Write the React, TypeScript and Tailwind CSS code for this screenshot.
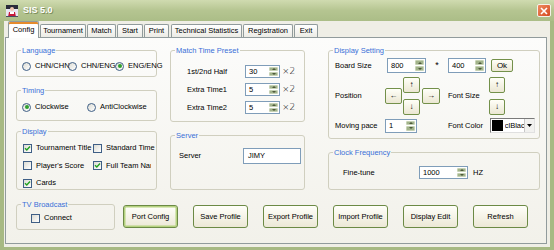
import React from "react"

const FONT = "font-['Liberation_Sans',Arial,sans-serif]"

function Radio({ on, label }: { on?: boolean; label: string }) {
  return (
    <span className="flex items-center gap-[4px] h-[10px] whitespace-nowrap">
      <span className="w-[9px] h-[9px] shrink-0 rounded-full border border-[#3f5f86] bg-gradient-to-br from-[#dcdcd4] to-white flex items-center justify-center">
        {on && <span className="w-[4px] h-[4px] rounded-full bg-[#2fa02f]" />}
      </span>
      <span>{label}</span>
    </span>
  )
}

function Check({ on, label, clip }: { on?: boolean; label: string; clip?: boolean }) {
  return (
    <span className="flex items-center gap-[4px] h-[10px] whitespace-nowrap">
      <span className="w-[9px] h-[9px] shrink-0 border border-[#3f5f86] bg-gradient-to-br from-[#dcdcd4] to-white flex items-center justify-center">
        {on && (
          <svg width="7" height="7" viewBox="0 0 7 7">
            <path d="M1 3.2 L2.8 5 L6 1.5" fill="none" stroke="#21a121" strokeWidth="1.4" />
          </svg>
        )}
      </span>
      <span className={clip ? "w-[45px] overflow-hidden" : ""}>{label}</span>
    </span>
  )
}

function SpinArrows() {
  return (
    <span className="flex flex-col w-[10px] gap-[1px] py-[1px] pr-[1px]">
      <span className="flex-1 rounded-[1px] bg-[#a2b38b] border border-[#c6d2b4] flex items-center justify-center">
        <svg width="4" height="2" viewBox="0 0 4 2"><path d="M0 2 L2 0 L4 2Z" fill="#4d5a3c" /></svg>
      </span>
      <span className="flex-1 rounded-[1px] bg-[#a2b38b] border border-[#c6d2b4] flex items-center justify-center">
        <svg width="4" height="2" viewBox="0 0 4 2"><path d="M0 0 L2 2 L4 0Z" fill="#4d5a3c" /></svg>
      </span>
    </span>
  )
}

function Spin({ value, className }: { value: string; className: string }) {
  return (
    <span className={`flex border border-[#7f9db9] bg-white ${className}`}>
      <span className="flex-1 flex items-center pl-[3px]">{value}</span>
      <SpinArrows />
    </span>
  )
}

function SmallBtn({ children, className }: { children: React.ReactNode; className: string }) {
  return (
    <span
      className={`flex items-center justify-center rounded-[2px] border border-[#73904a] bg-gradient-to-b from-[#fffff8] to-[#ebe7d3] text-[8px] leading-none ${className}`}
    >
      {children}
    </span>
  )
}

function Group({
  title,
  className,
  children,
}: {
  title: string
  className: string
  children: React.ReactNode
}) {
  return (
    <fieldset className={`border border-[#d0cfbf] rounded-[3px] min-w-0 ${className}`}>
      <legend className="ml-[4px] px-[1px] leading-[9px] text-[#3a70d8]">{title}</legend>
      {children}
    </fieldset>
  )
}

function Button({ label, primary }: { label: string; primary?: boolean }) {
  return (
    <span
      className={`w-[55px] h-[23px] flex items-center justify-center rounded-[3px] border border-[#6c8a45] bg-gradient-to-b from-[#fffffa] to-[#ece8d6] ${
        primary ? "shadow-[inset_0_0_0_1.5px_#b5d27f]" : ""
      }`}
    >
      {label}
    </span>
  )
}

const tabs = [
  { name: "Tournament", w: "w-[46px]", ml: "ml-[1px]" },
  { name: "Match", w: "w-[29px]", ml: "ml-[1px]" },
  { name: "Start", w: "w-[26px]", ml: "ml-[1px]" },
  { name: "Print", w: "w-[25px]", ml: "ml-[1px]" },
  { name: "Technical Statistics", w: "w-[71px]", ml: "ml-[2px]" },
  { name: "Registration", w: "w-[50px]", ml: "ml-[1px]" },
  { name: "Exit", w: "w-[24px]", ml: "ml-[1px]" },
]

export default function App() {
  return (
    <div className={`w-[554px] h-[250px] flex flex-col bg-[#a7b983] text-black text-[7.5px] ${FONT}`}>
      {/* title bar */}
      <div className="h-[21px] shrink-0 flex items-center bg-gradient-to-b from-[#d0dbb0] via-[#b5c591] to-[#abbd87] px-[5px]">
        <svg width="14" height="14" viewBox="0 0 14 14">
          <rect x="1" y="1" width="12" height="12" fill="#e9e6f2" />
          <rect x="1" y="1" width="12" height="4" fill="#2b2b3a" />
          <circle cx="7" cy="5" r="2" fill="#f2c7b0" />
          <path d="M3 13 L4 8 L10 8 L11 13Z" fill="#c8183a" />
          <rect x="5" y="8" width="4" height="2" fill="#fff" />
          <rect x="1" y="12" width="12" height="1" fill="#4b4b62" />
        </svg>
        <span className="ml-[4px] text-[9px] font-bold text-white [text-shadow:1px_1px_0_#7d8e5c]">SIS 5.0</span>
        <span className="ml-auto mr-[-2px] w-[14px] h-[13px] rounded-[2px] border border-[#f4f1e8] bg-gradient-to-br from-[#ef8a5e] to-[#d4481f] flex items-center justify-center">
          <svg width="8" height="8" viewBox="0 0 8 8">
            <path d="M1 1 L7 7 M7 1 L1 7" stroke="#fff" strokeWidth="1.6" />
          </svg>
        </span>
      </div>

      {/* client */}
      <div className="flex-1 mx-[4px] mb-[3px] bg-[#efeee6] flex flex-col">
        <div className="h-[16px] shrink-0 flex items-end pl-[4px]">
          <span className="relative z-10 -mb-[1px] w-[31px] h-[17px] flex items-center justify-center bg-white border border-b-0 border-[#919b9c] rounded-t-[2px] shadow-[inset_0_2px_0_#e68b2c]">
            Config
          </span>
          {tabs.map((t) => (
            <span
              key={t.name}
              className={`${t.w} ${t.ml} h-[13px] flex items-center justify-center whitespace-nowrap bg-gradient-to-b from-white to-[#ecebe5] border border-b-0 border-[#919b9c] rounded-t-[2px]`}
            >
              {t.name}
            </span>
          ))}
        </div>

        {/* tab page */}
        <div className="ml-[1px] w-[542px] h-[207px] border border-[#919b9c] bg-gradient-to-b from-[#fcfcfb] to-[#f2f1ea] pl-[10px] pt-[8px]">
          <div className="flex">
            {/* column 1 */}
            <div className="w-[141px] flex flex-col">
              <Group title="Language" className="h-[31px]">
                <div className="flex pt-[6px] pl-[5px]">
                  <span className="w-[46px]"><Radio label="CHN/CHN" /></span>
                  <span className="w-[47px]"><Radio label="CHN/ENG" /></span>
                  <Radio on label="ENG/ENG" />
                </div>
              </Group>
              <Group title="Timing" className="h-[35px] mt-[9px]">
                <div className="flex pt-[7px] pl-[5px]">
                  <span className="w-[65px]"><Radio on label="Clockwise" /></span>
                  <Radio label="AntiClockwise" />
                </div>
              </Group>
              <Group title="Display" className="h-[63.5px] mt-[5.5px]">
                <div className="flex flex-col gap-[7.5px] pt-[7.5px] pl-[6px]">
                  <div className="flex">
                    <span className="w-[70px]"><Check on label="Tournament Title" /></span>
                    <Check label="Standard Time" />
                  </div>
                  <div className="flex">
                    <span className="w-[70px]"><Check label="Player's Score" /></span>
                    <Check on clip label="Full Team Name" />
                  </div>
                  <Check on label="Cards" />
                </div>
              </Group>
            </div>

            {/* column 2 */}
            <div className="w-[135px] ml-[13px] flex flex-col">
              <Group title="Match Time Preset" className="h-[76px]">
                <div className="flex flex-col gap-[5px] pt-[10px] pl-[16px]">
                  {[
                    ["1st/2nd Half", "30"],
                    ["Extra Time1", "5"],
                    ["Extra Time2", "5"],
                  ].map(([l, v]) => (
                    <div key={l} className="flex items-center h-[13px]">
                      <span className="w-[58px]">{l}</span>
                      <Spin value={v} className="w-[35px] h-[13px]" />
                      <span className="ml-[2px] text-[9px] leading-none font-['DejaVu_Sans',sans-serif] font-light">×2</span>
                    </div>
                  ))}
                </div>
              </Group>
              <Group title="Server" className="h-[59.5px] mt-[8.5px]">
                <div className="flex items-center pt-[8.5px] pl-[8px]">
                  <span className="w-[64px]">Server</span>
                  <span className="w-[58px] h-[16px] border border-[#7f9db9] bg-white flex items-center pl-[4px]">JIMY</span>
                </div>
              </Group>
            </div>

            {/* column 3 */}
            <div className="w-[212px] ml-[23px] flex flex-col">
              <Group title="Display Setting" className="h-[93px]">
                <div className="flex flex-col pt-[3px] pl-[6px]">
                  <div className="flex items-center h-[15px]">
                    <span className="w-[52px]">Board Size</span>
                    <Spin value="800" className="w-[39px] h-[15px]" />
                    <span className="w-[22px] text-center text-[9px] leading-none">*</span>
                    <Spin value="400" className="w-[38px] h-[15px]" />
                    <SmallBtn className="ml-[5px] w-[22px] h-[13px] text-[7.5px]">Ok</SmallBtn>
                  </div>
                  <div className="flex items-center h-[38px] mt-[4px]">
                    <span className="w-[50px]">Position</span>
                    <SmallBtn className="w-[17px] h-[16px]">←</SmallBtn>
                    <span className="ml-[1px] flex flex-col gap-[6px]">
                      <SmallBtn className="w-[17px] h-[16px]">↑</SmallBtn>
                      <SmallBtn className="w-[17px] h-[16px]">↓</SmallBtn>
                    </span>
                    <SmallBtn className="ml-[2px] w-[18px] h-[16px]">→</SmallBtn>
                    <span className="ml-[8px] w-[41px]">Font Size</span>
                    <span className="flex flex-col gap-[6px]">
                      <SmallBtn className="w-[16px] h-[16px]">↑</SmallBtn>
                      <SmallBtn className="w-[16px] h-[16px]">↓</SmallBtn>
                    </span>
                  </div>
                  <div className="flex items-center h-[15px] mt-[3px]">
                    <span className="w-[50px]">Moving pace</span>
                    <Spin value="1" className="w-[32px] h-[14px]" />
                    <span className="ml-[31px] w-[42px]">Font Color</span>
                    <span className="w-[45px] h-[15px] flex items-center border border-[#7a7a7a] border-b-[#e0e0e0] border-r-[#e0e0e0] bg-white">
                      <span className="ml-[1px] w-[11px] h-[11px] bg-black" />
                      <span className="ml-[2px] w-[20px] overflow-hidden whitespace-nowrap">clBlack</span>
                      <span className="ml-auto w-[10px] h-[13px] flex items-center justify-center bg-[#f1f1ef] border-l border-[#c8c8c8]">
                        <svg width="5" height="3" viewBox="0 0 5 3"><path d="M0 0 L5 0 L2.5 3Z" fill="#000" /></svg>
                      </span>
                    </span>
                  </div>
                </div>
              </Group>
              <Group title="Clock Frequency" className="h-[42.5px] mt-[8.5px]">
                <div className="flex items-center pt-[9.5px] pl-[14px]">
                  <span className="w-[76px]">Fine-tune</span>
                  <Spin value="1000" className="w-[49px] h-[13px]" />
                  <span className="ml-[5px]">HZ</span>
                </div>
              </Group>
            </div>
          </div>

          {/* bottom row */}
          <div className="flex mt-[9.5px]">
            <Group title="TV Broadcast" className="w-[99px] h-[30.5px]">
              <div className="pt-[4.5px] pl-[14px]">
                <Check label="Connect" />
              </div>
            </Group>
            <div className="ml-[8px] mt-[5.5px] flex gap-[15px]">
              <Button primary label="Port Config" />
              <Button label="Save Profile" />
              <Button label="Export Profile" />
              <Button label="Import Profile" />
              <Button label="Display Edit" />
              <Button label="Refresh" />
            </div>
          </div>
        </div>
      </div>
    </div>
  )
}
